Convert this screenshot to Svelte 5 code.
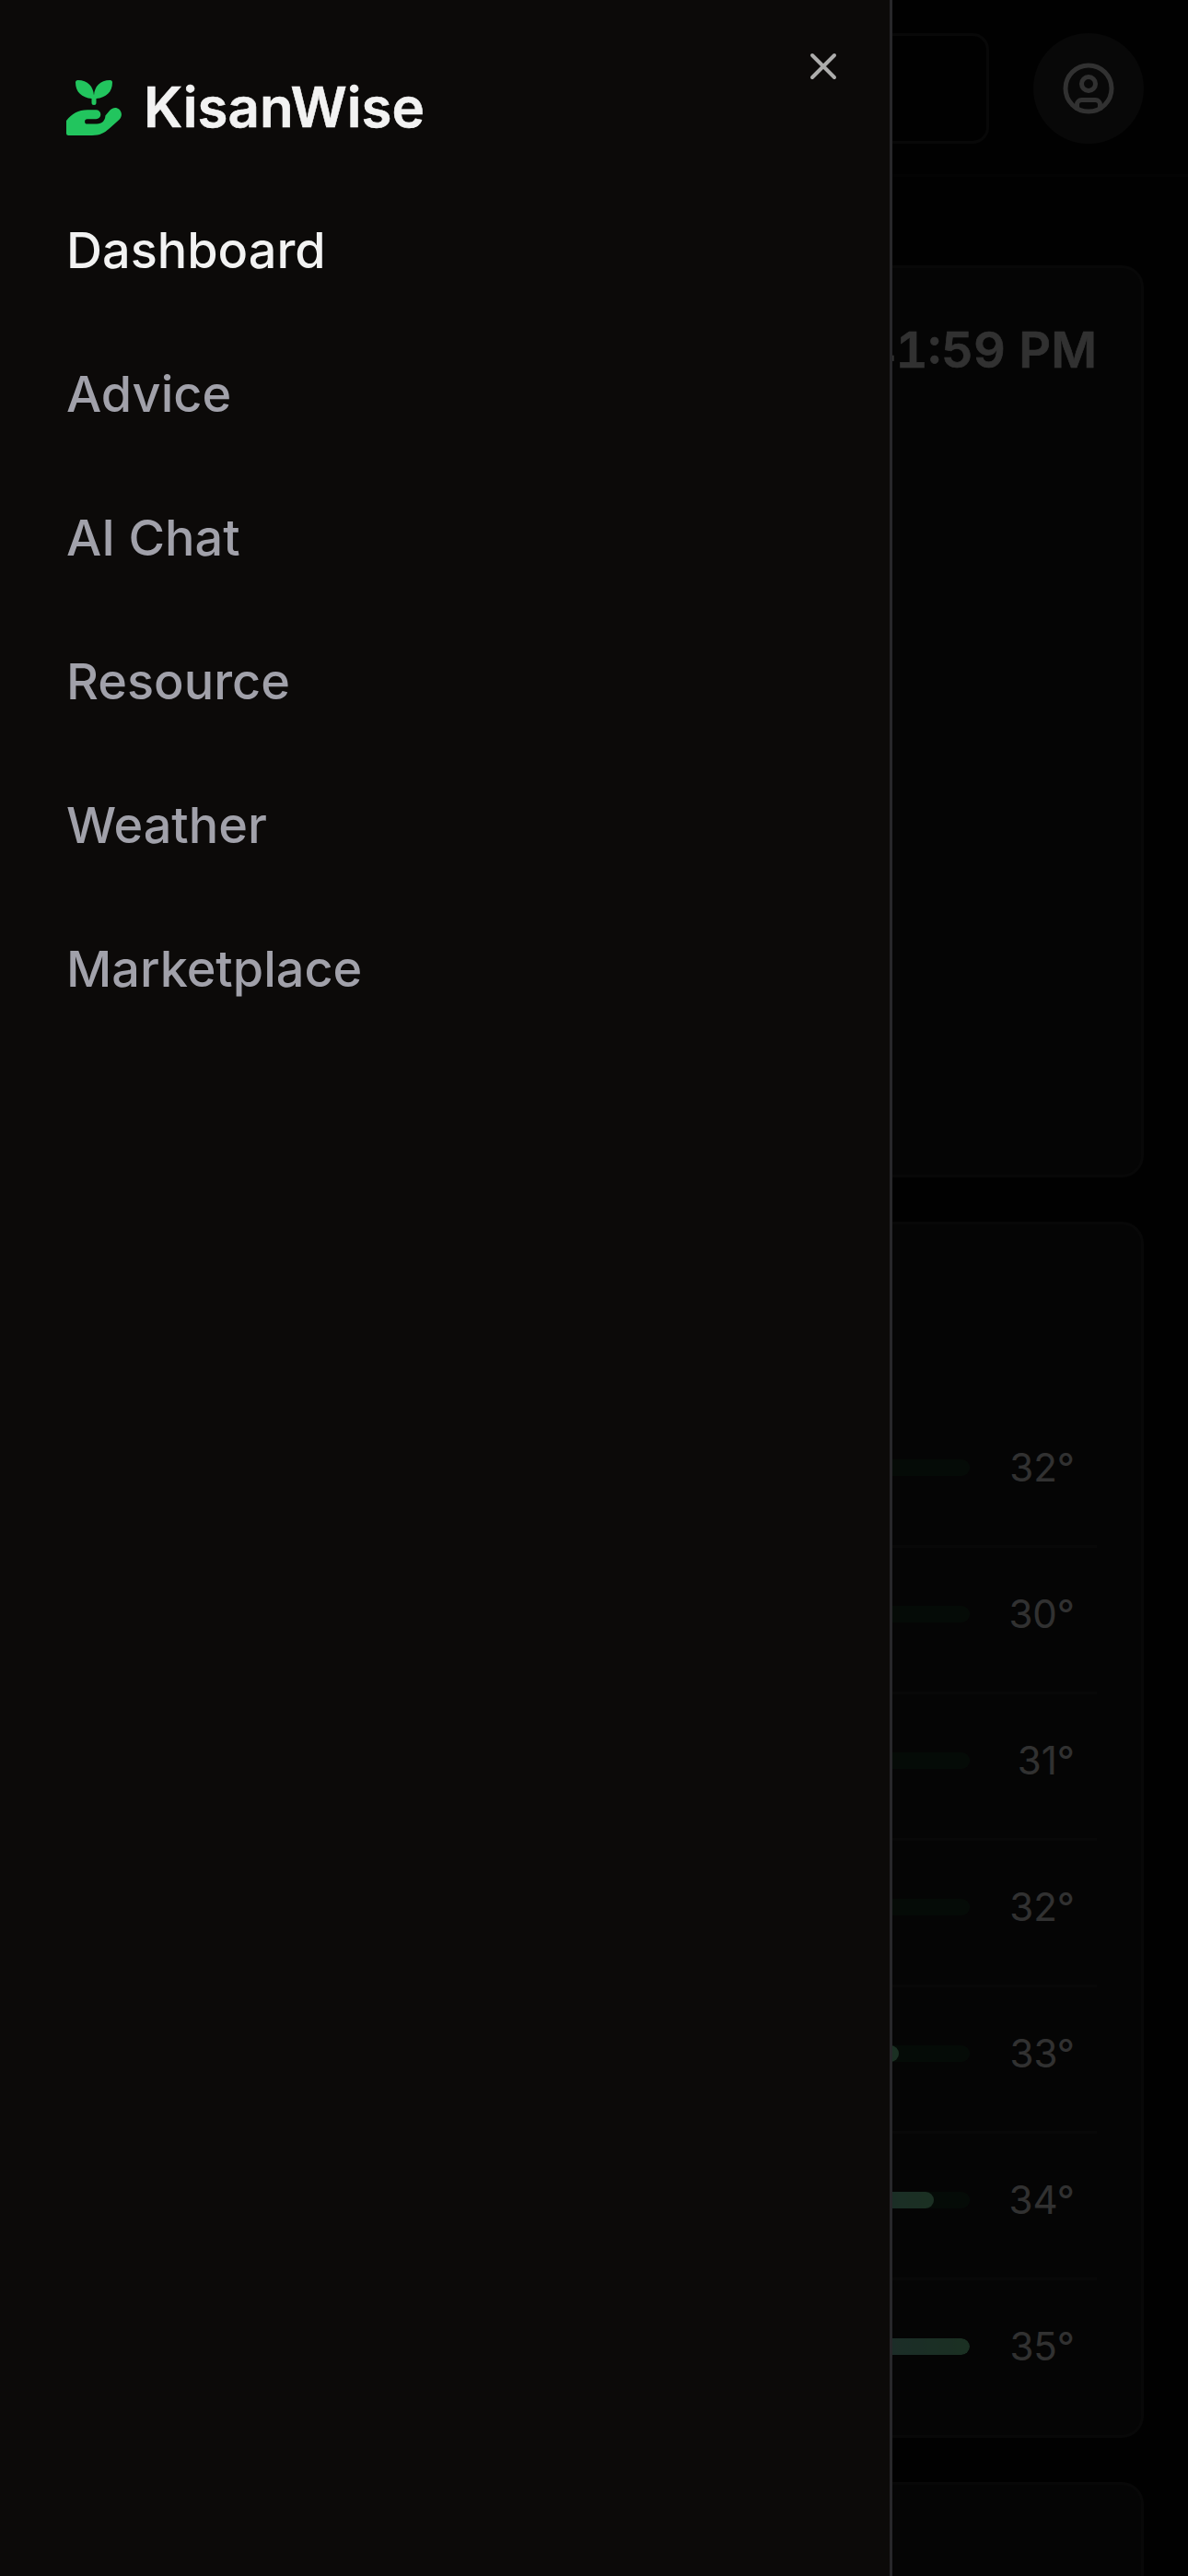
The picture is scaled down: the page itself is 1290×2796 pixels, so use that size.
<script>
  const nav = ['Dashboard', 'Advice', 'AI Chat', 'Resource', 'Weather', 'Marketplace'];
  const active = 'Dashboard';
  // fill: how much of the temperature track is covered, in percent
  const temps = [
    { t: 32, fill: 0 },
    { t: 30, fill: 0 },
    { t: 31, fill: 0 },
    { t: 32, fill: 0 },
    { t: 33, fill: 70.8 },
    { t: 34, fill: 85.3 },
    { t: 35, fill: 100 }
  ];
</script>

<div class="screen">
  <div class="page">
    <header>
      <div class="search"></div>
      <button class="avatar" aria-label="Account">
        <svg viewBox="0 0 24 24" fill="none" stroke="currentColor" stroke-width="2" stroke-linecap="round" stroke-linejoin="round">
          <circle cx="12" cy="12" r="10" />
          <circle cx="12" cy="10" r="3" />
          <path d="M7 20.662V19a2 2 0 0 1 2-2h6a2 2 0 0 1 2 2v1.662" />
        </svg>
      </button>
    </header>
    <main>
      <section class="card now"><div class="time">41:59 PM</div></section>
      <section class="card forecast">
        {#each temps as row}
          <div class="row">
            <div class="track">
              {#if row.fill}<div class="fill" style="width:{row.fill}%"></div>{/if}
            </div>
            <span class="temp">{row.t}°</span>
          </div>
        {/each}
      </section>
      <section class="card rest"></section>
    </main>
  </div>
  <div class="overlay"></div>
  <aside>
    <div class="brand">
      <svg viewBox="0 0 60 60" fill="currentColor">
        <path d="M12.5 0C23.500 0 29.300 7 30 16.500C30.700 7 36.500 0 47.500 0Q50 0 50 2.500C50 13 43 19.200 32.500 19.900V24.500a2.500 2.500 0 0 1-5 0V19.900C17 19.200 10 13 10 2.500Q10 0 12.500 0Z" />
        <path d="M0 44C6 36.500 13 32.300 23 32.300H32.300a5 5 0 0 1 0 10H22.700a2.600 2.600 0 0 0 0 5.200H33C39 47.500 42.300 43.500 42.400 38.500L47.500 32.600C50.500 29.500 54.500 29.200 57.500 31.800C60.700 35 60.700 39.600 57.600 42.800L47 52.300C41 57.500 36.500 60 28 60H2.500Q0 60 0 57.500Z" />
      </svg>
      <span>KisanWise</span>
    </div>
    <nav>
      {#each nav as item}
        <a href="#{item}" class:active={item === active}>{item}</a>
      {/each}
    </nav>
    <button class="close" aria-label="Close">
      <svg viewBox="0 0 48 48" fill="none" stroke="currentColor" stroke-width="4" stroke-linecap="round">
        <path d="M12 12L36 36M36 12L12 36" />
      </svg>
    </button>
  </aside>
</div>

<style>
  :global(body) { margin: 0; background: #0c0a09; }
  .screen { position: relative; width: 1290px; height: 2796px; overflow: hidden; font-family: Inter, sans-serif; color: #f2f2f2; }
  .screen * { box-sizing: border-box; }
  button { border: 0; padding: 0; background: none; color: inherit; }
  svg { display: block; }
  .page { height: 100%; background: #070707; overflow: hidden; }
  header { height: 192px; padding: 36px 48px 0; display: flex; align-items: flex-start; gap: 48px; border-bottom: 3px solid #101010; }
  .search { flex: 1; height: 120px; border: 3px solid #282828; border-radius: 18px; }
  .avatar { width: 120px; height: 120px; border-radius: 50%; background: #282828; display: grid; place-items: center; }
  .avatar svg { width: 60px; height: 60px; }
  main { padding: 96px 48px 0; display: flex; flex-direction: column; gap: 48px; }
  .card { background: #191919; border: 3px solid #282828; border-radius: 24px; }
  .now { height: 990px; padding: 47px 48px 48px; }
  .time { text-align: right; font-size: 54px; line-height: 84px; font-weight: 600; font-variant-numeric: tabular-nums; -webkit-text-stroke: 0.6px currentColor; }
  .forecast { height: 1320px; padding: 192px 48px 24px; }
  .row { display: flex; align-items: center; height: 159px; padding-bottom: 12px; border-bottom: 3px solid #282828; }
  .row:last-child { height: 156px; border-bottom: 0; }
  .track { flex: 1; height: 18px; margin-left: 690px; border-radius: 9px; background: #1d3b25; overflow: hidden; }
  .fill { height: 100%; border-radius: 9px; background: linear-gradient(90deg, #93c5fd, #86efac); }
  .temp { width: 114px; margin-right: 24px; text-align: right; font-size: 42px; line-height: 60px; }
  .rest { height: 400px; }
  .overlay { position: absolute; inset: 0; background: rgba(0, 0, 0, 0.8); }
  aside { position: absolute; inset: 0 auto 0 0; width: 969px; padding: 72px; background: #0c0a09; border-right: 3px solid #27272a; }
  .brand { display: flex; align-items: center; gap: 24px; height: 90px; font-size: 60px; font-weight: 600; line-height: 84px; }
  .brand svg { width: 60px; height: 60px; color: #22c55e; }
  .brand span { padding-bottom: 3px; -webkit-text-stroke: 0.6px currentColor; }
  nav { display: flex; flex-direction: column; gap: 72px; margin-top: 68px; }
  nav a { font-size: 54px; line-height: 84px; font-weight: 500; color: #a1a1aa; text-decoration: none; }
  nav a.active { color: #f2f2f2; }
  .close { position: absolute; top: 48px; right: 48px; width: 48px; height: 48px; opacity: 0.7; }
  .close svg { width: 48px; height: 48px; }
</style>
